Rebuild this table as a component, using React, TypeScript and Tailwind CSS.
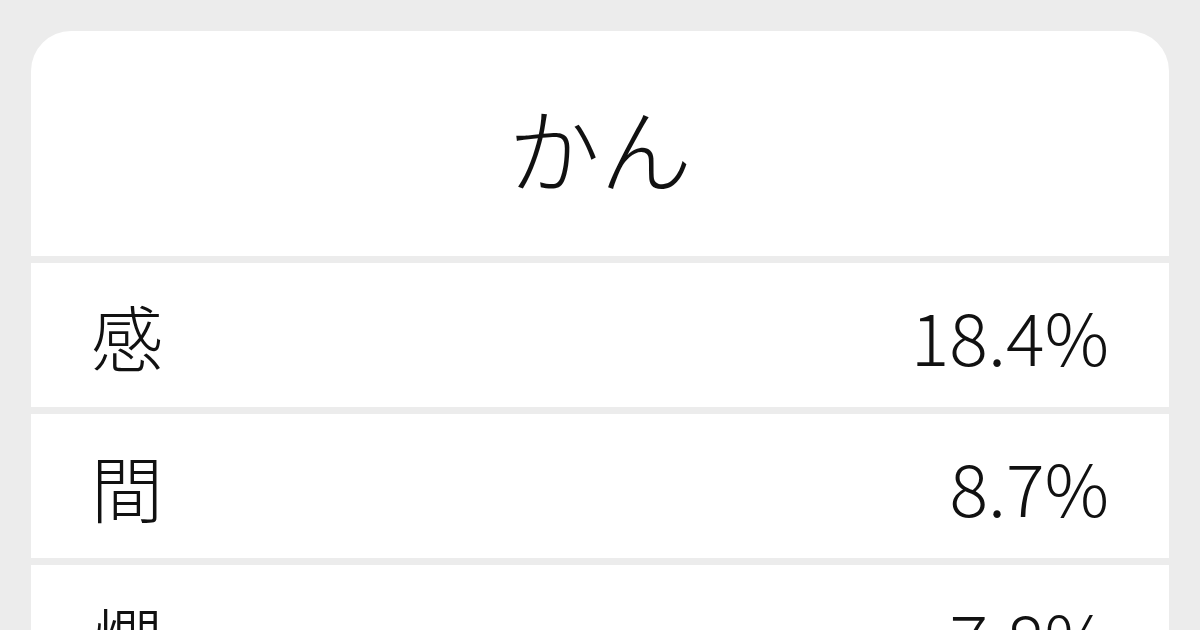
const rows = [
  { kanji: "感", pct: "18.4%" },
  { kanji: "間", pct: "8.7%" },
  { kanji: "燗", pct: "7.8%" },
];

export default function App() {
  return (
    <div
      className="h-[630px] w-[1200px] overflow-hidden bg-[#ececec] px-[31px] pt-[31px] text-[#111]"
      style={{ fontFamily: '"Noto Sans CJK JP", "Noto Sans", sans-serif' }}
    >
      <div className="flex flex-col gap-[7px] overflow-hidden rounded-t-[40px]">
        <div className="flex h-[225px] items-center justify-center bg-white pt-[4px] text-[92px] font-light leading-none">
          かん
        </div>
        {rows.map((row) => (
          <div
            key={row.kanji}
            className="flex h-[144px] shrink-0 items-center justify-between bg-white pl-[60px] pr-[60px] text-[72px] font-light leading-none"
          >
            <span>{row.kanji}</span>
            <span>{row.pct}</span>
          </div>
        ))}
      </div>
    </div>
  );
}
